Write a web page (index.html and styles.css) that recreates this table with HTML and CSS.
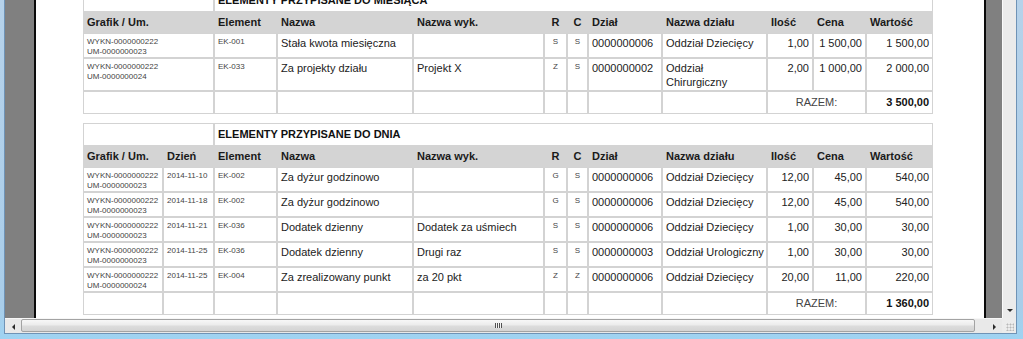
FILE: index.html
```html
<!DOCTYPE html>
<html lang="pl">
<head>
<meta charset="utf-8">
<title>Raport</title>
<link rel="stylesheet" href="styles.css">
</head>
<body>
<div class="window">
  <div class="client">
    <div class="viewport">
      <div class="page">
        <table class="report first">
          <colgroup>
            <col class="w-graf"><col class="w-el"><col class="w-naz"><col class="w-wyk"><col class="w-r"><col class="w-c"><col class="w-dz"><col class="w-ndz"><col class="w-il"><col class="w-ce"><col class="w-wa">
          </colgroup>
          <tr class="title-row"><td></td><td colspan="10" class="title">ELEMENTY PRZYPISANE DO MIESIĄCA</td></tr>
          <tr class="head">
            <th>Grafik / Um.</th><th>Element</th><th>Nazwa</th><th>Nazwa wyk.</th><th class="ctr">R</th><th class="ctr">C</th><th>Dział</th><th>Nazwa działu</th><th>Ilość</th><th>Cena</th><th>Wartość</th>
          </tr>
          <tr>
            <td class="sm">WYKN-0000000222<br>UM-0000000023</td><td class="sm">EK-001</td><td>Stała kwota miesięczna</td><td></td><td class="sm ctr">S</td><td class="sm ctr">S</td><td>0000000006</td><td class="dept">Oddział Dziecięcy</td><td class="num">1,00</td><td class="num">1 500,00</td><td class="num">1 500,00</td>
          </tr>
          <tr>
            <td class="sm">WYKN-0000000222<br>UM-0000000024</td><td class="sm">EK-033</td><td>Za projekty działu</td><td>Projekt X</td><td class="sm ctr">Z</td><td class="sm ctr">S</td><td>0000000002</td><td class="dept">Oddział Chirurgiczny</td><td class="num">2,00</td><td class="num">1 000,00</td><td class="num">2 000,00</td>
          </tr>
          <tr class="total">
            <td></td><td></td><td></td><td></td><td></td><td></td><td></td><td></td><td colspan="2" class="razem">RAZEM:</td><td class="num sum">3 500,00</td>
          </tr>
        </table>

        <table class="report">
          <colgroup>
            <col class="w-graf2"><col class="w-day"><col class="w-el"><col class="w-naz"><col class="w-wyk"><col class="w-r"><col class="w-c"><col class="w-dz"><col class="w-ndz"><col class="w-il"><col class="w-ce"><col class="w-wa">
          </colgroup>
          <tr class="title-row"><td colspan="2"></td><td colspan="10" class="title">ELEMENTY PRZYPISANE DO DNIA</td></tr>
          <tr class="head">
            <th>Grafik / Um.</th><th>Dzień</th><th>Element</th><th>Nazwa</th><th>Nazwa wyk.</th><th class="ctr">R</th><th class="ctr">C</th><th>Dział</th><th>Nazwa działu</th><th>Ilość</th><th>Cena</th><th>Wartość</th>
          </tr>
          <tr>
            <td class="sm">WYKN-0000000222<br>UM-0000000023</td><td class="sm">2014-11-10</td><td class="sm">EK-002</td><td>Za dyżur godzinowo</td><td></td><td class="sm ctr">G</td><td class="sm ctr">S</td><td>0000000006</td><td class="dept">Oddział Dziecięcy</td><td class="num">12,00</td><td class="num">45,00</td><td class="num">540,00</td>
          </tr>
          <tr>
            <td class="sm">WYKN-0000000222<br>UM-0000000023</td><td class="sm">2014-11-18</td><td class="sm">EK-002</td><td>Za dyżur godzinowo</td><td></td><td class="sm ctr">G</td><td class="sm ctr">S</td><td>0000000006</td><td class="dept">Oddział Dziecięcy</td><td class="num">12,00</td><td class="num">45,00</td><td class="num">540,00</td>
          </tr>
          <tr>
            <td class="sm">WYKN-0000000222<br>UM-0000000023</td><td class="sm">2014-11-21</td><td class="sm">EK-036</td><td>Dodatek dzienny</td><td>Dodatek za uśmiech</td><td class="sm ctr">S</td><td class="sm ctr">S</td><td>0000000006</td><td class="dept">Oddział Dziecięcy</td><td class="num">1,00</td><td class="num">30,00</td><td class="num">30,00</td>
          </tr>
          <tr>
            <td class="sm">WYKN-0000000222<br>UM-0000000023</td><td class="sm">2014-11-25</td><td class="sm">EK-036</td><td>Dodatek dzienny</td><td>Drugi raz</td><td class="sm ctr">S</td><td class="sm ctr">S</td><td>0000000003</td><td class="dept">Oddział Urologiczny</td><td class="num">1,00</td><td class="num">30,00</td><td class="num">30,00</td>
          </tr>
          <tr>
            <td class="sm">WYKN-0000000222<br>UM-0000000024</td><td class="sm">2014-11-25</td><td class="sm">EK-004</td><td>Za zrealizowany punkt</td><td>za 20 pkt</td><td class="sm ctr">Z</td><td class="sm ctr">Z</td><td>0000000006</td><td class="dept">Oddział Dziecięcy</td><td class="num">20,00</td><td class="num">11,00</td><td class="num">220,00</td>
          </tr>
          <tr class="total">
            <td></td><td></td><td></td><td></td><td></td><td></td><td></td><td></td><td></td><td colspan="2" class="razem">RAZEM:</td><td class="num sum">1 360,00</td>
          </tr>
        </table>
      </div>
    </div>
    <div class="vscroll">
      <div class="vtrack"></div>
      <div class="sbtn"><span class="arr-down"></span></div>
    </div>
    <div class="hscroll">
      <div class="sbtn"><span class="arr-left"></span></div>
      <div class="thumb"><span class="grip"></span></div>
      <div class="htrack"></div>
      <div class="sbtn"><span class="arr-right"></span></div>
    </div>
    <div class="corner"><span class="sizegrip"></span></div>
  </div>
</div>
</body>
</html>
```

FILE: styles.css
```css
* { box-sizing: border-box; }
html, body { margin: 0; padding: 0; }
body {
  width: 1023px;
  height: 339px;
  overflow: hidden;
  font-family: "Liberation Sans", Arial, sans-serif;
  background: #b2d0ea;
}
.window {
  width: 1023px;
  height: 339px;
  padding: 0 6px 5px 4px;
  background: linear-gradient(to bottom, #b6d2ea 0%, #a9cde9 90%, #9fd3f2 100%);
}
.client {
  width: 1013px;
  height: 334px;
  border: 1px solid #6f93b6;
  border-top: 0;
  display: grid;
  grid-template-columns: 997px 14px;
  grid-template-rows: 318px 15px;
  background: #ececec;
}
.viewport {
  background: #808080;
  overflow: hidden;
  padding-left: 29px;
  display: flex;
}
.page {
  flex: none;
  width: 952px;
  background: #fff;
  border-left: 2px solid #0a0a0a;
  border-right: 2px solid #0a0a0a;
  padding-left: 47px;
}

/* report tables */
.report {
  width: 850px;
  table-layout: fixed;
  border-collapse: separate;
  border-spacing: 0;
  color: #222;
  font-size: 11px;
}
.report.first { margin-top: -11px; }
.report + .report { margin-top: 9px; }
.w-graf { width: 131px; }
.w-graf2 { width: 80px; }
.w-day { width: 51px; }
.w-el { width: 63px; }
.w-naz { width: 136px; }
.w-wyk { width: 131px; }
.w-r { width: 23px; }
.w-c { width: 21px; }
.w-dz { width: 74px; }
.w-ndz { width: 105px; }
.w-il { width: 46px; }
.w-ce { width: 53px; }
.w-wa { width: 67px; }

.report td, .report th {
  border: 1px solid #d3d3d3;
  padding: 2px 3px 1px 3px;
  vertical-align: top;
  line-height: 14px;
  text-align: left;
  overflow: hidden;
}
.report .title-row td {
  padding: 2px 3px 4px 3px;
  vertical-align: middle;
  border-bottom: 0;
  height: 22px;
}
.report .title {
  font-weight: bold;
  color: #111;
}
.report .head th {
  background: #d4d4d4;
  border-color: #d4d4d4;
  font-weight: bold;
  color: #1a1a1a;
  padding: 3px 3px;
  vertical-align: middle;
}
.report .sm {
  font-size: 8px;
  line-height: 9.5px;
  color: #444;
  padding: 3px 1px 1px 3px;
  white-space: nowrap;
}
.report .ctr { text-align: center; padding-left: 0; padding-right: 0; }
.report .num { text-align: right; }
.report .dept { padding-right: 1px; }
.report .total td {
  padding: 3px 3px 4px 3px;
}
.report .razem {
  text-align: center;
  color: #444;
}
.report .sum {
  font-weight: bold;
  color: #111;
}

/* scrollbars */
.vscroll {
  display: flex;
  flex-direction: column;
  border-left: 1px solid #fafafa;
  background: #ebebeb;
}
.vtrack { flex: 1; }
.sbtn {
  flex: none;
  width: 16px;
  height: 15px;
  display: flex;
  align-items: center;
  justify-content: center;
}
.vscroll .sbtn { width: 13px; height: 15px; }
.arr-down {
  width: 0; height: 0;
  border-left: 3px solid transparent;
  border-right: 3px solid transparent;
  border-top: 3px solid #2a2a2a;
}
.arr-left {
  width: 0; height: 0;
  border-top: 3px solid transparent;
  border-bottom: 3px solid transparent;
  border-right: 3px solid #2a2a2a;
}
.arr-right {
  width: 0; height: 0;
  border-top: 3px solid transparent;
  border-bottom: 3px solid transparent;
  border-left: 3px solid #2a2a2a;
}
.hscroll {
  display: flex;
  background: #e9e9e9;
  border-top: 1px solid #f7f7f7;
}
.thumb {
  flex: none;
  width: 954px;
  margin: 0 0 1px 0;
  border: 1px solid #a3a3a3;
  border-radius: 2px;
  background: linear-gradient(to bottom, #f7f7f7 0%, #ececec 45%, #dcdcdc 55%, #d4d4d4 100%);
  display: flex;
  align-items: center;
  justify-content: center;
}
.grip {
  width: 7px;
  height: 5px;
  background: repeating-linear-gradient(to right, #505050 0 1px, #f4f4f4 1px 2px);
}
.htrack { flex: 1; }
.corner {
  background: #ececec;
  display: flex;
  align-items: flex-end;
  justify-content: flex-end;
  padding: 0 2px 2px 0;
}
.sizegrip {
  width: 8px;
  height: 8px;
  background: radial-gradient(circle, #b8b8b8 0.8px, transparent 1.2px) 0 0 / 3px 3px;
}
```
